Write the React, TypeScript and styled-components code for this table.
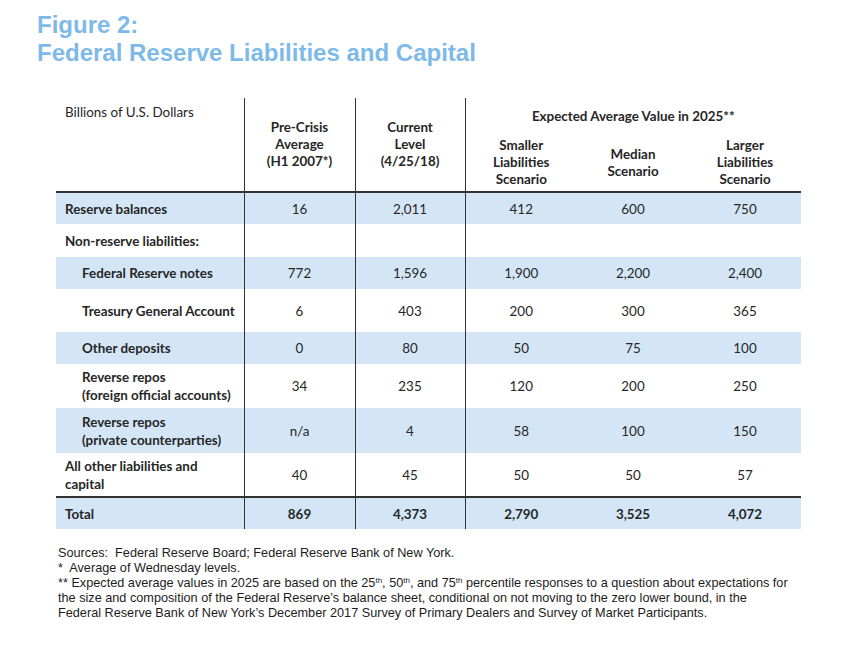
import React from 'react';
import styled, { createGlobalStyle, css } from 'styled-components';

const Global = createGlobalStyle`
  html, body { margin: 0; padding: 0; background: #ffffff; }
  body { width: 864px; height: 647px; overflow: hidden; }
`;

const Page = styled.div`
  display: flex;
  flex-direction: column;
  padding-top: 11px;
`;

const Title = styled.h1`
  margin: 0 0 0 37px;
  font-family: "Liberation Sans", Arial, sans-serif;
  font-weight: 700;
  font-size: 24px;
  line-height: 28px;
  color: #7dbae9;
`;

const Table = styled.table`
  margin: 31px 0 0 56px;
  border-collapse: collapse;
  table-layout: fixed;
  width: 745px;
  font-family: Lato, "Liberation Sans", sans-serif;
  font-size: 13.4px;
  color: #262626;
`;

const HeadRow = styled.tr<{ $h: number }>`
  height: ${(p) => p.$h}px;
`;

const Th = styled.th<{ $divider?: boolean; $bottom?: boolean }>`
  padding: 0;
  font-weight: 700;
  line-height: 17px;
  text-align: center;
  vertical-align: middle;
  ${(p) => p.$divider && css`border-right: 1px solid #333;`}
  ${(p) => p.$bottom && css`border-bottom: 2px solid #333;`}
`;

const UnitsTh = styled(Th)`
  font-weight: 400;
  text-align: left;
  vertical-align: top;
  padding: 6px 0 0 9px;
`;

const GroupTh = styled(Th)`
  vertical-align: middle;
`;

const BodyRow = styled.tr<{ $h: number; $shade?: boolean; $total?: boolean }>`
  height: ${(p) => p.$h}px;
  background: ${(p) => (p.$shade ? '#d4e6f6' : '#ffffff')};
  ${(p) => p.$total && css`border-top: 2px solid #333;`}
`;

const LabelTd = styled.td<{ $indent?: boolean }>`
  padding: 0 0 0 ${(p) => (p.$indent ? 26 : 9)}px;
  font-weight: 700;
  line-height: 18px;
  text-align: left;
  vertical-align: middle;
  border-right: 1px solid #333;
`;

const ValueTd = styled.td<{ $divider?: boolean; $bold?: boolean }>`
  padding: 0;
  text-align: center;
  vertical-align: middle;
  font-weight: ${(p) => (p.$bold ? 700 : 400)};
  ${(p) => p.$divider && css`border-right: 1px solid #333;`}
`;

const Notes = styled.div`
  margin: 17px 0 0 58px;
  font-family: "Liberation Sans", Arial, sans-serif;
  font-size: 12.7px;
  line-height: 15px;
  color: #1c1c1c;
  white-space: pre;
`;

const NoteLine = styled.div``;

const Sup = styled.sup`
  font-size: 8px;
  line-height: 0;
  vertical-align: 4px;
`;

type Row = {
  label: string[];
  indent?: boolean;
  values: string[];
  shade?: boolean;
  h: number;
  total?: boolean;
};

const rows: Row[] = [
  { label: ['Reserve balances'], values: ['16', '2,011', '412', '600', '750'], shade: true, h: 32 },
  { label: ['Non-reserve liabilities:'], values: ['', '', '', '', ''], h: 33 },
  { label: ['Federal Reserve notes'], indent: true, values: ['772', '1,596', '1,900', '2,200', '2,400'], shade: true, h: 32 },
  { label: ['Treasury General Account'], indent: true, values: ['6', '403', '200', '300', '365'], h: 43 },
  { label: ['Other deposits'], indent: true, values: ['0', '80', '50', '75', '100'], shade: true, h: 32 },
  { label: ['Reverse repos', '(foreign official accounts)'], indent: true, values: ['34', '235', '120', '200', '250'], h: 44 },
  { label: ['Reverse repos', '(private counterparties)'], indent: true, values: ['n/a', '4', '58', '100', '150'], shade: true, h: 45 },
  { label: ['All other liabilities and', 'capital'], values: ['40', '45', '50', '50', '57'], h: 44 },
  { label: ['Total'], values: ['869', '4,373', '2,790', '3,525', '4,072'], shade: true, h: 32, total: true },
];

const Lines = ({ lines }: { lines: string[] }) => (
  <>
    {lines.map((l, i) => (
      <React.Fragment key={i}>
        {i > 0 && <br />}
        {l}
      </React.Fragment>
    ))}
  </>
);

export default function App() {
  return (
    <Page>
      <Global />
      <Title>
        Figure 2:
        <br />
        Federal Reserve Liabilities and Capital
      </Title>
      <Table>
        <colgroup>
          <col style={{ width: 188 }} />
          <col style={{ width: 111 }} />
          <col style={{ width: 110 }} />
          <col style={{ width: 112 }} />
          <col style={{ width: 112 }} />
          <col style={{ width: 112 }} />
        </colgroup>
        <thead>
          <HeadRow $h={36}>
            <UnitsTh rowSpan={2} $divider $bottom>
              Billions of U.S. Dollars
            </UnitsTh>
            <Th rowSpan={2} $divider $bottom>
              <Lines lines={['Pre-Crisis', 'Average', '(H1 2007*)']} />
            </Th>
            <Th rowSpan={2} $divider $bottom>
              <Lines lines={['Current', 'Level', '(4/25/18)']} />
            </Th>
            <GroupTh colSpan={3}>Expected Average Value in 2025**</GroupTh>
          </HeadRow>
          <HeadRow $h={58}>
            <Th $bottom>
              <Lines lines={['Smaller', 'Liabilities', 'Scenario']} />
            </Th>
            <Th $bottom>
              <Lines lines={['Median', 'Scenario']} />
            </Th>
            <Th $bottom>
              <Lines lines={['Larger', 'Liabilities', 'Scenario']} />
            </Th>
          </HeadRow>
        </thead>
        <tbody>
          {rows.map((r, i) => (
            <BodyRow key={i} $h={r.h} $shade={r.shade} $total={r.total}>
              <LabelTd $indent={r.indent}>
                <Lines lines={r.label} />
              </LabelTd>
              {r.values.map((v, j) => (
                <ValueTd key={j} $divider={j < 2} $bold={r.total}>
                  {v}
                </ValueTd>
              ))}
            </BodyRow>
          ))}
        </tbody>
      </Table>
      <Notes>
        <NoteLine>Sources:  Federal Reserve Board; Federal Reserve Bank of New York.</NoteLine>
        <NoteLine>*  Average of Wednesday levels.</NoteLine>
        <NoteLine>
          ** Expected average values in 2025 are based on the 25<Sup>th</Sup>, 50<Sup>th</Sup>, and 75<Sup>th</Sup> percentile responses to a question about expectations for
        </NoteLine>
        <NoteLine>
          the size and composition of the Federal Reserve’s balance sheet, conditional on not moving to the zero lower bound, in the
        </NoteLine>
        <NoteLine>
          Federal Reserve Bank of New York’s December 2017 Survey of Primary Dealers and Survey of Market Participants.
        </NoteLine>
      </Notes>
    </Page>
  );
}
